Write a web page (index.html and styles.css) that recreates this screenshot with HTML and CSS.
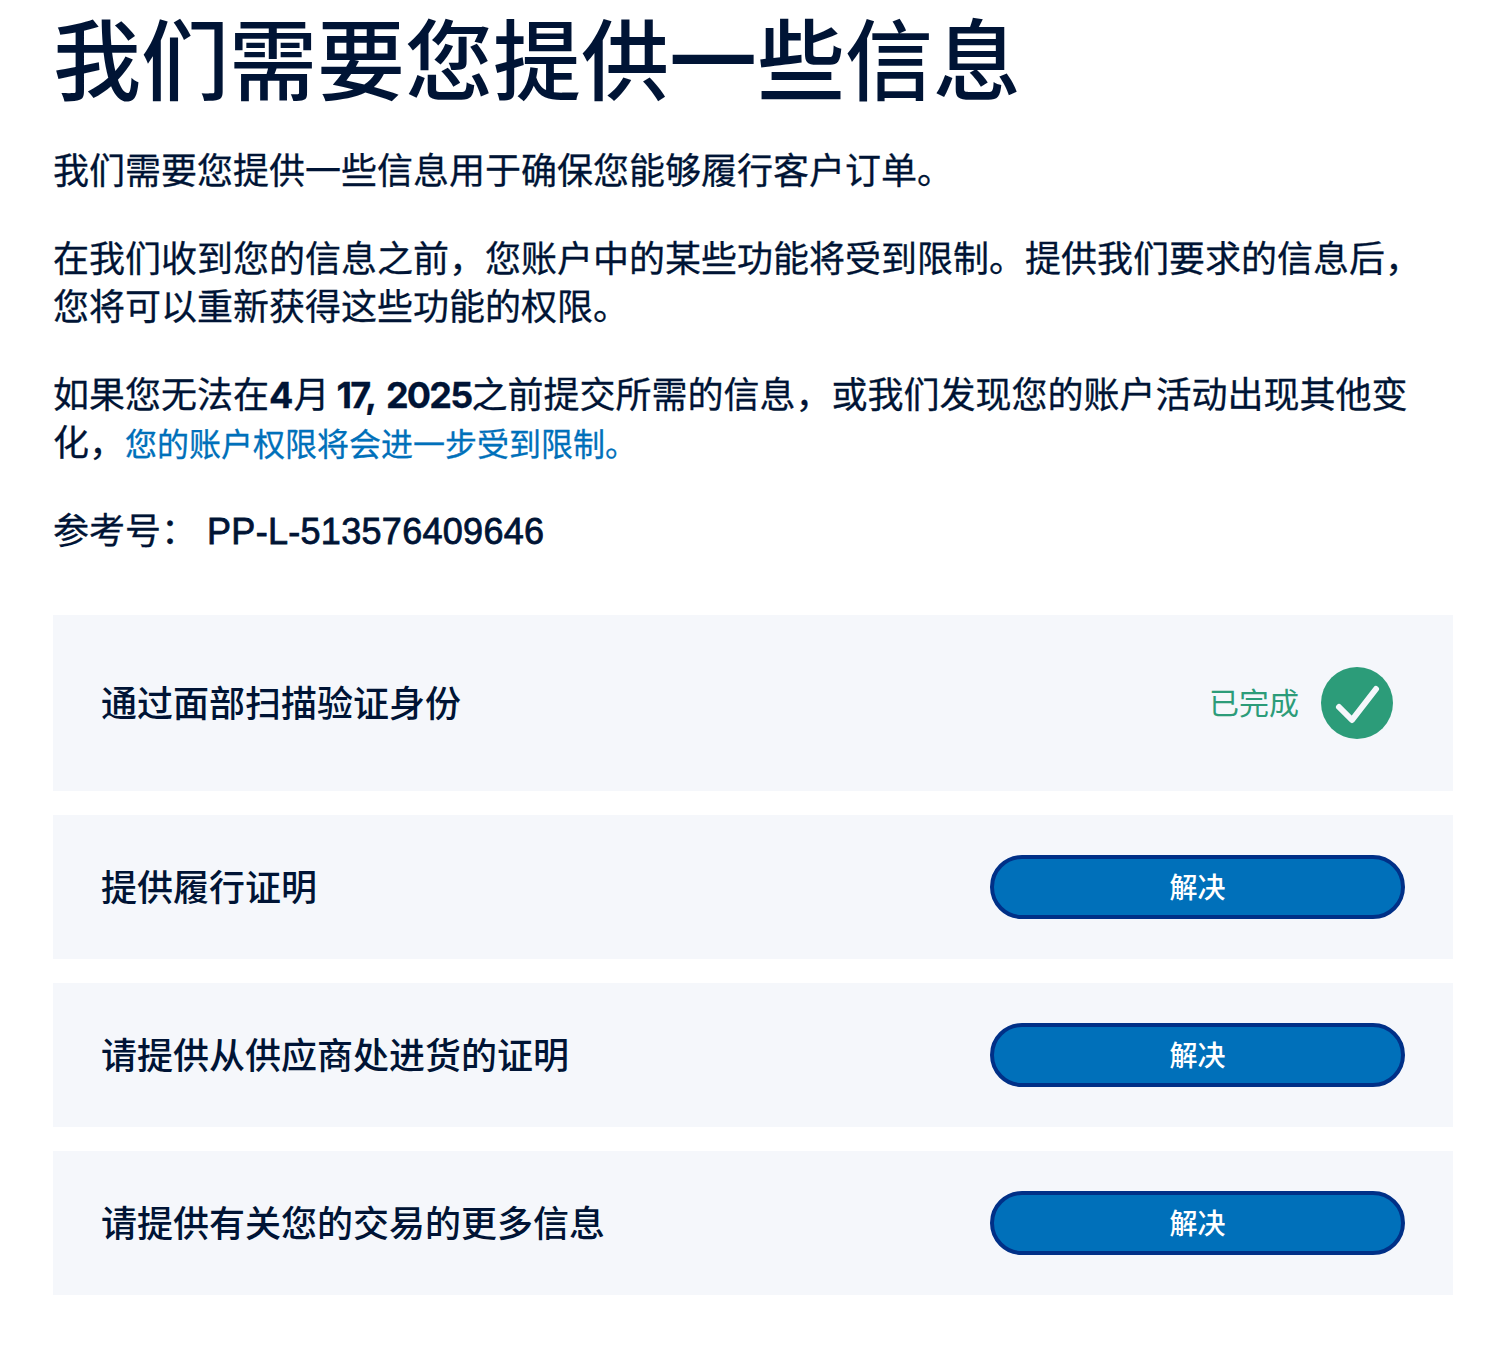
FILE: index.html
```html
<!DOCTYPE html>
<html lang="zh-CN">
<head>
  <meta charset="UTF-8" />
  <title>我们需要您提供一些信息</title>
  <link rel="stylesheet" href="styles.css">
</head>
<body>
  <div class="container">
    <h1>我们需要您提供一些信息</h1>
    <p>我们需要您提供一些信息用于确保您能够履行客户订单。</p>
    <p>在我们收到您的信息之前，您账户中的某些功能将受到限制。提供我们要求的信息后，<br>您将可以重新获得这些功能的权限。</p>
    <p>如果您无法在<b>4</b>月 <b class="year">17, 2025</b>之前提交所需的信息，或我们发现您的账户活动出现其他变<br>化，<a href="#" class="link">您的账户权限将会进一步受到限制。</a></p>
    <p class="ref"><span>参考号：</span><span class="ref-num">PP-L-513576409646</span></p>

    <ul class="task-list">
      <li class="task task-done">
        <span class="task-text">通过面部扫描验证身份</span>
        <div class="status">
          <span class="status-text">已完成</span>
          <svg class="check" viewBox="0 0 72 72" width="72" height="72">
            <circle cx="36" cy="36" r="36" fill="#2c9c79"/>
            <path d="M18 40 L31 53 L55 22" fill="none" stroke="#f5f7fb" stroke-width="6" stroke-linecap="round" stroke-linejoin="round"/>
          </svg>
        </div>
      </li>
      <li class="task">
        <span class="task-text">提供履行证明</span>
        <button>解决</button>
      </li>
      <li class="task">
        <span class="task-text">请提供从供应商处进货的证明</span>
        <button>解决</button>
      </li>
      <li class="task">
        <span class="task-text">请提供有关您的交易的更多信息</span>
        <button>解决</button>
      </li>
    </ul>
  </div>
</body>
</html>
```

FILE: styles.css
```css
body {
  margin: 0;
  background: #fff;
  color: #001435;
  font-family: "Inter", "Noto Sans CJK SC", sans-serif;
}

.container {
  width: 1400px;
  padding: 0 39px 65px 53px;
}

h1 {
  margin: 0 0 25px;
  font-size: 88px;
  line-height: 122px;
  font-weight: 500;
  color: #001435;
}

p {
  margin: 0 0 40px;
  font-size: 36px;
  line-height: 48px;
  -webkit-text-stroke: 0.3px currentColor;
}

p b {
  font-weight: 700;
}

.year {
  margin-left: -3px;
  letter-spacing: -1.75px;
  word-spacing: 5px;
}

.link {
  color: #0070ba;
  font-size: 32px;
  line-height: 1;
  text-decoration: none;
}

.ref {
  margin-bottom: 59px;
}

.ref-num {
  margin-left: 10px;
  letter-spacing: 0.3px;
  font-family: "Liberation Sans", sans-serif;
  -webkit-text-stroke: 0.8px currentColor;
}

.task-list {
  list-style: none;
  margin: 0;
  padding: 0;
  display: flex;
  flex-direction: column;
  gap: 24px;
}

.task {
  display: flex;
  align-items: center;
  justify-content: space-between;
  height: 144px;
  padding: 0 48px;
  background: #f5f7fb;
}

.task-done {
  height: 176px;
  padding-right: 60px;
}

.task-text {
  font-size: 36px;
  line-height: 44px;
  margin-top: 1px;
  font-weight: 500;
}

.status {
  display: flex;
  align-items: center;
  gap: 22px;
}

.status-text {
  margin-top: -4px;
  color: #2c9c79;
  font-size: 30px;
}

.check {
  display: block;
}

button {
  width: 415px;
  height: 64px;
  padding: 0 0 2px;
  border: 4px solid #003087;
  border-radius: 32px;
  background: #0070ba;
  color: #fff;
  font-family: inherit;
  font-size: 28px;
  font-weight: 500;
}
```
